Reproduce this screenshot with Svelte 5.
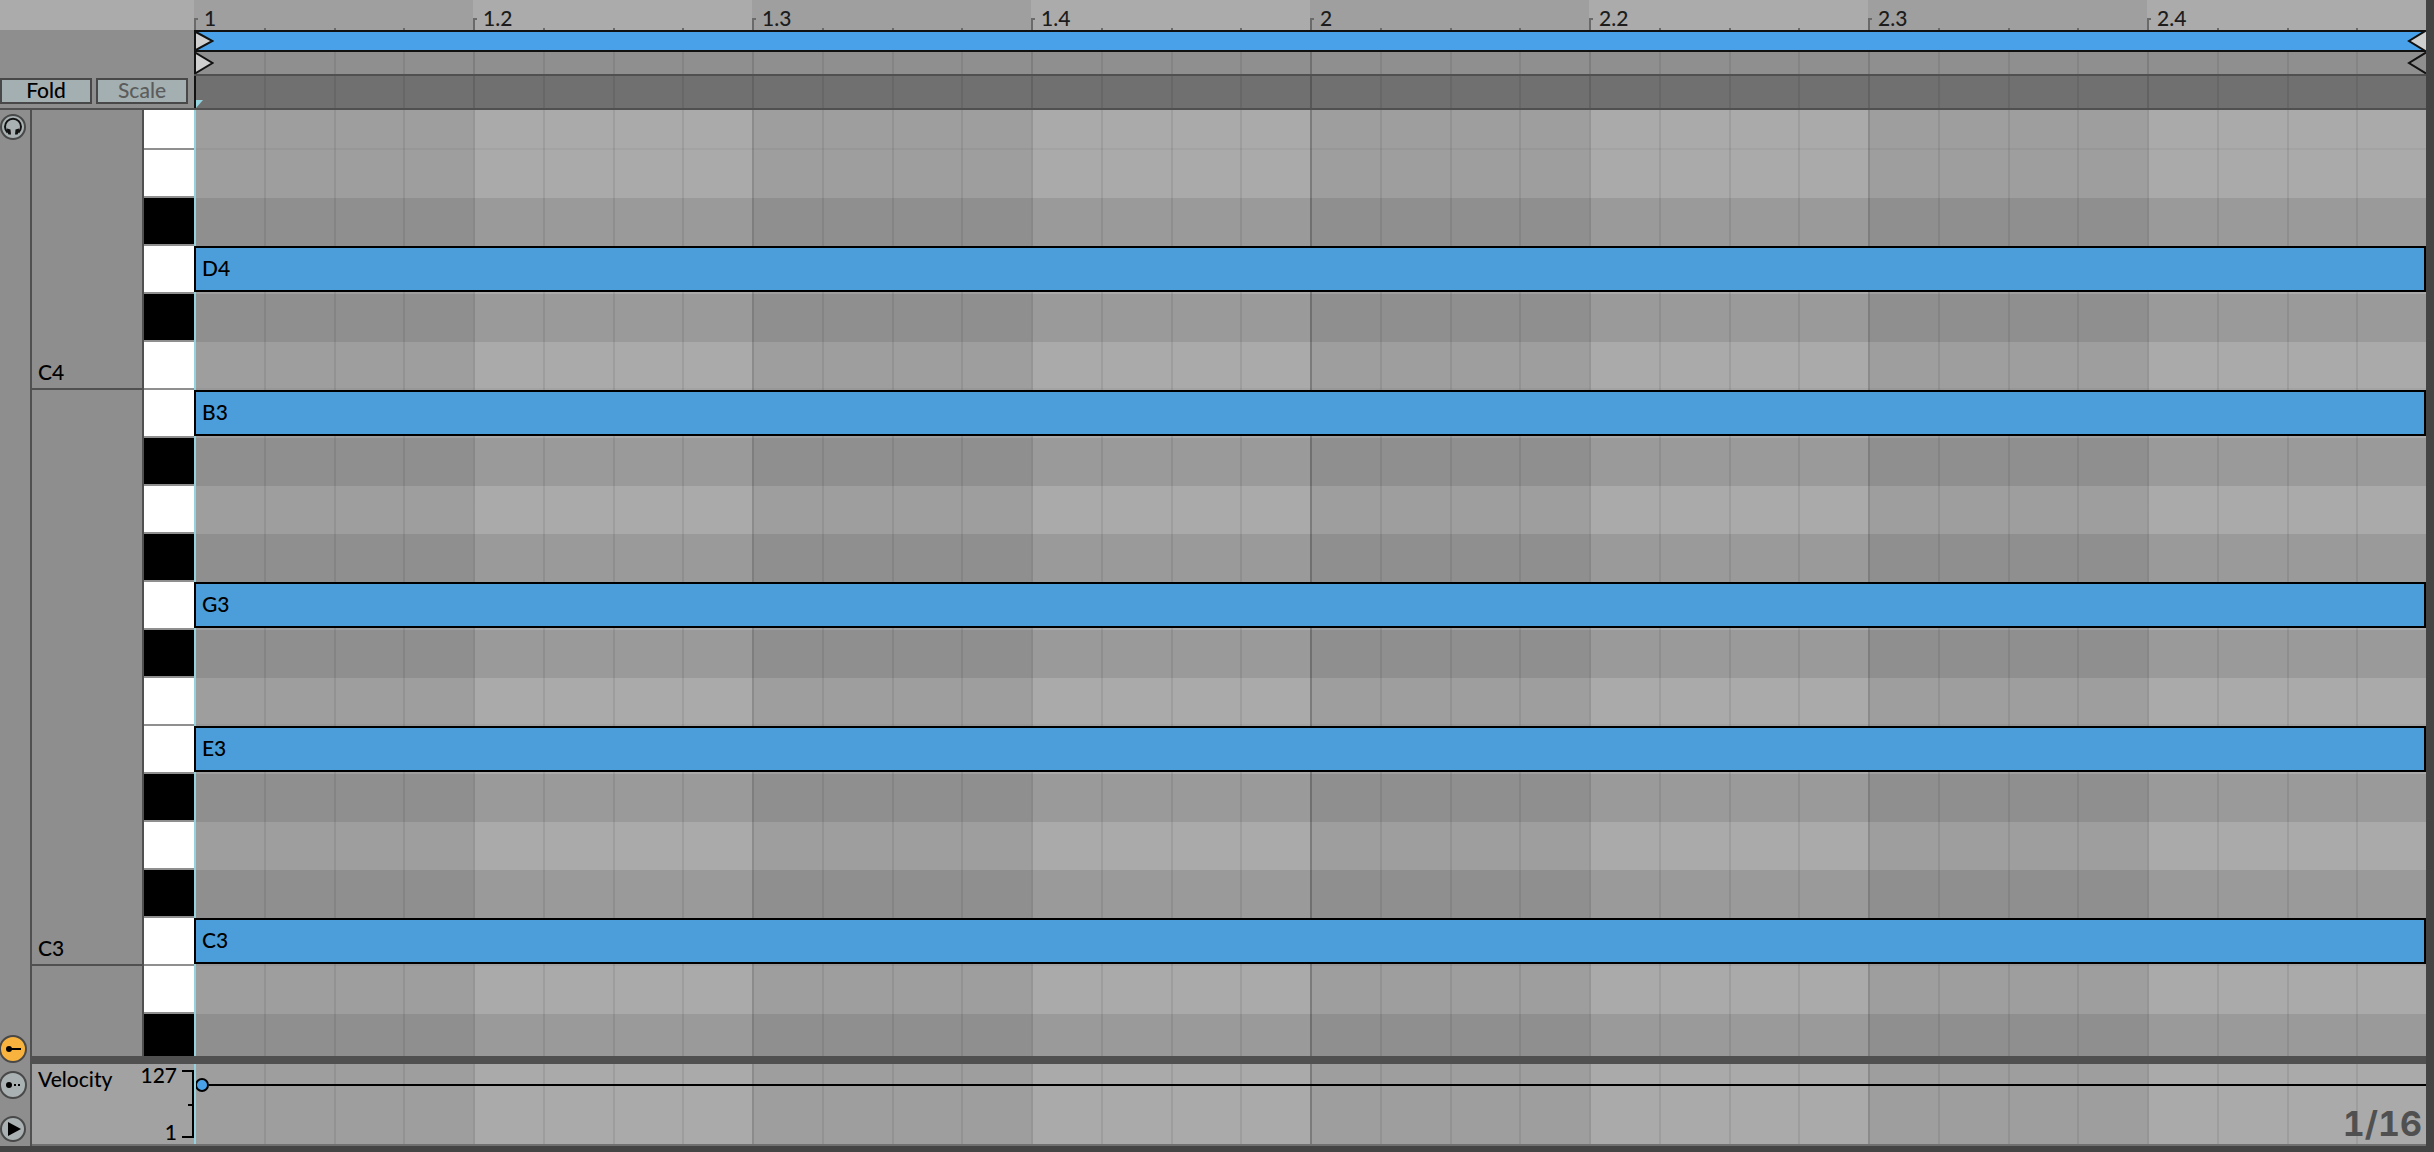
<script>
  const beats = ['1', '1.2', '1.3', '1.4', '2', '2.2', '2.3', '2.4'];
  const cells = Array.from({ length: 32 }, (_, i) => i);

  // Rows from the highest visible pitch down to the lowest.
  const pitches = [
    'F4', 'E4', 'D#4', 'D4', 'C#4', 'C4', 'B3', 'A#3', 'A3', 'G#3',
    'G3', 'F#3', 'F3', 'E3', 'D#3', 'D3', 'C#3', 'C3', 'B2', 'A#2'
  ];
  const notes = new Set(['D4', 'B3', 'G3', 'E3', 'C3']);
  const isBlack = (p) => p.includes('#');
  const isEdge = (p) => !isBlack(p) && (p[0] === 'F' || p[0] === 'C');

  let fold = $state(false);
</script>

{#snippet gridCells()}
  <div class="cells">
    {#each cells as c}
      <i class="cell" class:light={Math.floor(c / 4) % 2 === 1} class:beat={c % 4 === 0} class:bar={c % 16 === 0}></i>
    {/each}
  </div>
{/snippet}

<main class="editor">
  <header class="top">
    <div class="corner">
      <div class="corner-ruler"></div>
      <div class="buttons">
        <button type="button" class="toggle" aria-pressed={fold} onclick={() => (fold = !fold)}>Fold</button>
        <button type="button" class="toggle" disabled>Scale</button>
      </div>
    </div>
    <div class="timeline">
      <div class="ruler">
        {#each beats as b, i}
          <div class="ruler-beat" class:light={i % 2 === 1}>
            <span class="flag"></span>
            <span class="ruler-label">{b}</span>
            <div class="ticks"><i></i><i></i><i></i><i></i></div>
          </div>
        {/each}
      </div>
      <div class="loop">
        <svg class="marker" viewBox="0 0 20 22" aria-hidden="true"><path d="M1 1.5 18.500 11 1 20.500Z" /></svg>
        <svg class="marker" viewBox="0 0 20 22" aria-hidden="true"><path d="M20 0.500 3 11 20 21.500" /></svg>
      </div>
      <div class="clip stack">
        {@render gridCells()}
        <div class="clip-markers">
          <svg class="marker" viewBox="0 0 20 22" aria-hidden="true"><path d="M1 0.500 18.500 11 1 21.500Z" /></svg>
          <svg class="marker hollow" viewBox="0 0 20 22" aria-hidden="true"><path d="M20 0.500 3 11 20 21.500" /></svg>
        </div>
      </div>
      <div class="scrub stack">
        {@render gridCells()}
        <svg class="insert" viewBox="0 0 8 8" aria-hidden="true"><path d="M0 0H7L0 8Z" /></svg>
      </div>
    </div>
  </header>

  <div class="body">
    <aside class="tools">
      <button type="button" class="round" aria-label="Preview notes">
        <svg viewBox="0 0 28 28">
          <circle class="disc" cx="13" cy="14" r="12" />
          <path d="M7.500 19.500A8 8 0 1 1 18.500 19.500" fill="none" stroke="#111" stroke-width="2" />
          <path d="M7 15.500 10.500 16.500 11 21.500 8.500 21.500Q6.500 19 7 15.500ZM19 15.500 15.500 16.500 15 21.500 17.500 21.500Q19.500 19 19 15.500Z" fill="#111" />
        </svg>
      </button>
      <div class="lane-tools">
        <button type="button" class="round" aria-label="Show velocity lane">
          <svg viewBox="0 0 28 28">
            <circle class="disc on" cx="13" cy="14" r="13" />
            <circle cx="9" cy="14" r="3" /><path d="M9 13H21V15H9Z" />
          </svg>
        </button>
        <button type="button" class="round" aria-label="Show chance lane">
          <svg viewBox="0 0 28 28">
            <circle class="disc" cx="13" cy="14" r="13" />
            <circle cx="9" cy="14" r="3" /><path d="M14 13H16V15H14ZM18 13H20V15H18Z" />
          </svg>
        </button>
        <button type="button" class="round play" aria-label="Toggle lanes">
          <svg viewBox="0 0 28 28">
            <circle class="disc" cx="13" cy="14" r="12" />
            <path d="M8 7 21 14 8 21Z" />
          </svg>
        </button>
      </div>
    </aside>

    <div class="panes">
      <section class="roll">
        <div class="octaves">
          <span>C4</span>
          <span>C3</span>
          <span></span>
        </div>
        <div class="rows keys">
          {#each pitches as p}
            <div class="key" class:black={isBlack(p)}></div>
          {/each}
        </div>
        <div class="notes stack">
          {@render gridCells()}
          <div class="rows">
            {#each pitches as p}
              <div class="lane" class:dark={isBlack(p)} class:edge={isEdge(p)}>
                {#if notes.has(p)}
                  <button type="button" class="note">{p}</button>
                {/if}
              </div>
            {/each}
          </div>
        </div>
      </section>

      <section class="velocity">
        <div class="velocity-head">
          <span class="velocity-name">Velocity</span>
          <div class="range"><span>127</span><span>1</span></div>
          <svg class="bracket" viewBox="0 0 12 80" aria-hidden="true">
            <path d="M0 7H11V73H0M6 41H11" />
          </svg>
        </div>
        <div class="velocity-lane stack">
          {@render gridCells()}
          <div class="level">
            <svg class="handle" viewBox="0 0 14 14" aria-hidden="true"><circle cx="7" cy="7" r="6" /></svg>
            <span class="level-line"></span>
          </div>
          <span class="resolution">1/16</span>
        </div>
      </section>
    </div>
  </div>
</main>

<style>
  :global(body) {
    margin: 0;
    background: #444;
  }
  .editor {
    box-sizing: border-box;
    min-height: 100vh;
    padding: 0 8px 6px 0;
    background: #444;
    color: #000;
    font: 500 21px/24px Lato, 'Liberation Sans', sans-serif;
    display: flex;
    flex-direction: column;
    overflow: hidden;
  }
  button {
    font: inherit;
    padding: 0;
    margin: 0;
  }
  svg {
    display: block;
    flex: none;
  }
  .stack {
    display: grid;
  }
  .stack > :global(*) {
    grid-area: 1 / 1;
  }

  .top {
    display: grid;
    grid-template-columns: 194px minmax(0, 1fr);
  }
  .corner {
    display: flex;
    flex-direction: column;
    background: #8e8e8e;
    border-bottom: 2px solid #505050;
  }
  .corner-ruler {
    height: 30px;
    background: #ababab;
  }
  .buttons {
    display: flex;
    gap: 4px;
    margin-top: auto;
    padding-bottom: 4px;
  }
  .toggle {
    box-sizing: border-box;
    width: 92px;
    height: 26px;
    line-height: 20px;
    padding-bottom: 2px;
    border: 2px solid #484848;
    background: #a3afb1;
    color: #000;
  }
  .toggle:disabled {
    color: #5c5c5c;
  }

  .ruler {
    display: grid;
    grid-template-columns: repeat(8, minmax(0, 1fr));
    height: 30px;
    color: #1c1c1c;
  }
  .ruler-beat {
    display: grid;
    grid-template-columns: 10px 1fr;
    grid-template-rows: 28px 2px;
    background: #9f9f9f;
  }
  .ruler-beat.light {
    background: #ababab;
  }
  .flag {
    width: 2px;
    height: 8px;
    margin-top: 18px;
    border-top: 2px solid #6a6a6a;
    border-left: 2px solid #6a6a6a;
  }
  .ruler-label {
    padding-top: 6px;
  }
  .ticks {
    grid-column: 1 / 3;
    display: grid;
    grid-template-columns: repeat(4, 1fr);
  }
  .ticks i {
    border-left: 2px solid #6a6a6a;
  }

  .loop {
    box-sizing: border-box;
    height: 22px;
    border-top: 2px solid #111;
    border-bottom: 2px solid #111;
    background: #49a2e9;
    display: flex;
    justify-content: space-between;
    align-items: center;
  }
  .marker {
    width: 20px;
    height: 22px;
    fill: #cfcfcf;
    stroke: #111;
    stroke-width: 2;
  }
  .marker.hollow {
    fill: #8f8f8f;
  }
  .clip {
    height: 22px;
    border-bottom: 2px solid #505050;
    --dark: #8f8f8f;
    --light: #8f8f8f;
  }
  .clip-markers {
    display: flex;
    justify-content: space-between;
  }
  .scrub {
    height: 32px;
    border-bottom: 2px solid #505050;
    --dark: #707070;
    --light: #707070;
  }
  .scrub::after,
  .velocity-lane::after {
    content: '';
    grid-area: 1 / 1;
    width: 2px;
    background: #111;
  }
  .insert {
    width: 8px;
    height: 8px;
    align-self: end;
    margin-left: 2px;
    fill: #94d3de;
  }

  .cells {
    display: grid;
    grid-template-columns: repeat(32, minmax(0, 1fr));
  }
  .cell {
    background: var(--dark, #9e9e9e);
    border-left: 2px solid transparent;
    border-image: linear-gradient(rgb(0 0 0 / 8%), rgb(0 0 0 / 8%)) 1;
  }
  .cell.light {
    background: var(--light, #aaa);
  }
  .cell.beat {
    border-image: linear-gradient(rgb(0 0 0 / 12%), rgb(0 0 0 / 12%)) 1;
  }
  .cell.bar {
    border-image: linear-gradient(rgb(0 0 0 / 22%), rgb(0 0 0 / 22%)) 1;
  }

  .body {
    flex: 1;
    display: grid;
    grid-template-columns: 32px minmax(0, 1fr);
  }
  .tools {
    display: flex;
    flex-direction: column;
    justify-content: space-between;
    box-sizing: border-box;
    background: #8e8e8e;
    border-right: 2px solid #505050;
    padding: 3px 0;
  }
  .round {
    display: block;
    width: 28px;
    height: 28px;
    border: 0;
    background: none;
  }
  .round svg {
    width: 28px;
    height: 28px;
    overflow: visible;
  }
  .disc {
    fill: #a9b1b2;
    stroke: #484848;
    stroke-width: 2;
  }
  .disc.on {
    fill: #f8b33e;
  }
  .lane-tools {
    display: flex;
    flex-direction: column;
    gap: 8px;
  }
  .play {
    margin-top: 8px;
  }

  .panes {
    display: flex;
    flex-direction: column;
  }
  .roll {
    display: grid;
    grid-template-columns: 110px 52px minmax(0, 1fr);
    border-bottom: 8px solid #505050;
  }
  .octaves {
    display: grid;
    grid-template-rows: 280px 576px 1fr;
    background: #8e8e8e;
  }
  .octaves span {
    display: flex;
    align-items: flex-end;
    padding: 0 0 4px 6px;
    border-bottom: 2px solid #505050;
  }
  .octaves span:last-child {
    border-bottom: 0;
  }
  .rows {
    display: grid;
    grid-template-rows: 40px repeat(18, 48px) 42px;
  }
  .keys {
    border-left: 2px solid #505050;
  }
  .key {
    background: #fff;
    border-bottom: 2px solid #8f8f8f;
  }
  .key.black {
    background: #000;
  }
  .key:last-child {
    border-bottom: 0;
  }
  .lane {
    border-left: 2px solid #94d3de;
  }
  .lane.edge {
    box-shadow: inset 0 -2px rgb(0 0 0 / 4%);
  }
  .lane.dark {
    background: rgb(0 0 0 / 9%);
    background-clip: padding-box;
  }
  .note {
    display: block;
    box-sizing: border-box;
    width: calc(100% + 2px);
    height: 46px;
    margin-left: -2px;
    padding: 0 6px 2px;
    border: 2px solid #000;
    background: #4c9eda;
    color: #000;
    text-align: left;
  }

  .velocity {
    flex: 1;
    display: grid;
    grid-template-columns: 162px minmax(0, 1fr);
    min-height: 80px;
    border-bottom: 2px solid #707070;
  }
  .velocity-head {
    display: flex;
    background: #a2a2a2;
    padding-left: 6px;
  }
  .velocity-name {
    padding-top: 3px;
  }
  .range {
    margin-left: auto;
    margin-right: 5px;
    display: flex;
    flex-direction: column;
    justify-content: space-between;
    text-align: right;
    padding-bottom: 1px;
    line-height: 22px;
  }
  .bracket {
    width: 12px;
    height: 80px;
    fill: none;
    stroke: #000;
    stroke-width: 2;
  }
  .velocity-lane::after {
    background: #94d3de;
  }
  .level {
    display: flex;
    align-items: center;
    align-self: start;
    padding: 14px 0 0 1px;
  }
  .handle {
    width: 14px;
    height: 14px;
    fill: #49a2e9;
    stroke: #000;
    stroke-width: 2;
    overflow: visible;
  }
  .level-line {
    flex: 1;
    height: 2px;
    background: #000;
  }
  .resolution {
    place-self: end;
    padding: 0 4px 2px 0;
    color: #505050;
    font: 700 34px/36px Inter, 'Liberation Sans', sans-serif;
    font-variant-numeric: tabular-nums;
  }
</style>
